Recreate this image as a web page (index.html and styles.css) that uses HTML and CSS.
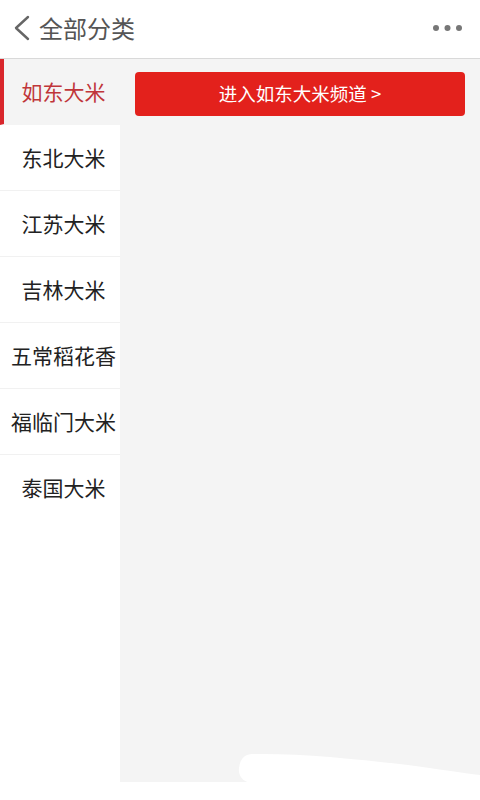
FILE: index.html
```html
<!DOCTYPE html>
<html lang="zh-CN">
  <head>
    <meta charset="UTF-8" />
    <meta name="viewport" content="width=device-width, initial-scale=1.0" />
    <title>全部分类</title>
    <link rel="stylesheet" href="styles.css">
  </head>
  <body>
    <header class="top-bar">
      <svg class="back" width="20" height="30" viewBox="0 0 20 30">
        <path d="M15 4 L3 15 L15 26" fill="none" stroke="#666" stroke-width="2.4" stroke-linecap="round" stroke-linejoin="round" />
      </svg>
      <h1 class="title">全部分类</h1>
      <svg class="more" width="32" height="8" viewBox="0 0 32 8">
        <circle cx="4" cy="4" r="3" fill="#777" />
        <circle cx="15.5" cy="4" r="3" fill="#777" />
        <circle cx="27" cy="4" r="3" fill="#777" />
      </svg>
    </header>

    <div class="main">
      <ul class="side-menu">
        <li class="active">如东大米</li>
        <li>东北大米</li>
        <li>江苏大米</li>
        <li>吉林大米</li>
        <li>五常稻花香</li>
        <li>福临门大米</li>
        <li>泰国大米</li>
      </ul>
      <div class="content">
        <button type="button" class="channel-btn">进入如东大米频道 &gt;</button>
      </div>
    </div>

    <svg class="blob" width="242" height="30" viewBox="0 0 242 30">
      <path d="M14 1 C60 0 120 6 170 12 C200 16 225 20 242 22 L242 30 L12 30 C4 28 0 22 1 15 C2 6 7 1 14 1 Z" fill="#fff" />
    </svg>
  </body>
</html>
```

FILE: styles.css
```css
body {
  margin: 0;
  width: 480px;
  height: 800px;
  background-color: #ffffff;
  font-family: "Noto Sans CJK SC", "Noto Sans", sans-serif;
  position: relative;
  overflow: hidden;
}

.top-bar {
  height: 58px;
  border-bottom: 1px solid #d9d9d9;
  display: flex;
  align-items: center;
  padding: 0 15px 2px 13px;
  box-sizing: border-box;
  height: 59px;
}

.back {
  flex: none;
}

.title {
  margin: 0 0 0 6px;
  font-size: 24px;
  font-weight: normal;
  color: #555;
  flex: 1;
  line-height: 1;
}

.more {
  flex: none;
  margin: 0 1px 0 0;
}

.main {
  display: grid;
  grid-template-columns: 120px 1fr;
  height: 723px;
}

.side-menu {
  list-style: none;
  margin: 0;
  padding: 0;
  background-color: #ffffff;
}

.side-menu li {
  height: 65px;
  border-bottom: 1px solid #f1f1f1;
  display: flex;
  align-items: center;
  justify-content: center;
  padding-left: 7px;
  font-size: 21px;
  color: #222;
  line-height: 1;
}

.side-menu li:last-child {
  border-bottom: none;
}

.side-menu li.active {
  background-color: #f4f4f4;
  border-left: 4px solid #d9262c;
  border-bottom-color: #f4f4f4;
  color: #c0363a;
  padding-left: 3px;
  height: 66px;
  box-sizing: border-box;
}

.content {
  background-color: #f4f4f4;
  padding: 13px 15px 0 15px;
}

.channel-btn {
  width: 100%;
  height: 44px;
  border: none;
  border-radius: 4px;
  background-color: #e3211c;
  color: #ffffff;
  font-family: "Noto Sans CJK SC", "Noto Sans", sans-serif;
  font-size: 18.5px;
  padding: 0 0 2px 0;
  cursor: pointer;
  display: block;
}

.blob {
  position: absolute;
  left: 238px;
  top: 753px;
}
```
